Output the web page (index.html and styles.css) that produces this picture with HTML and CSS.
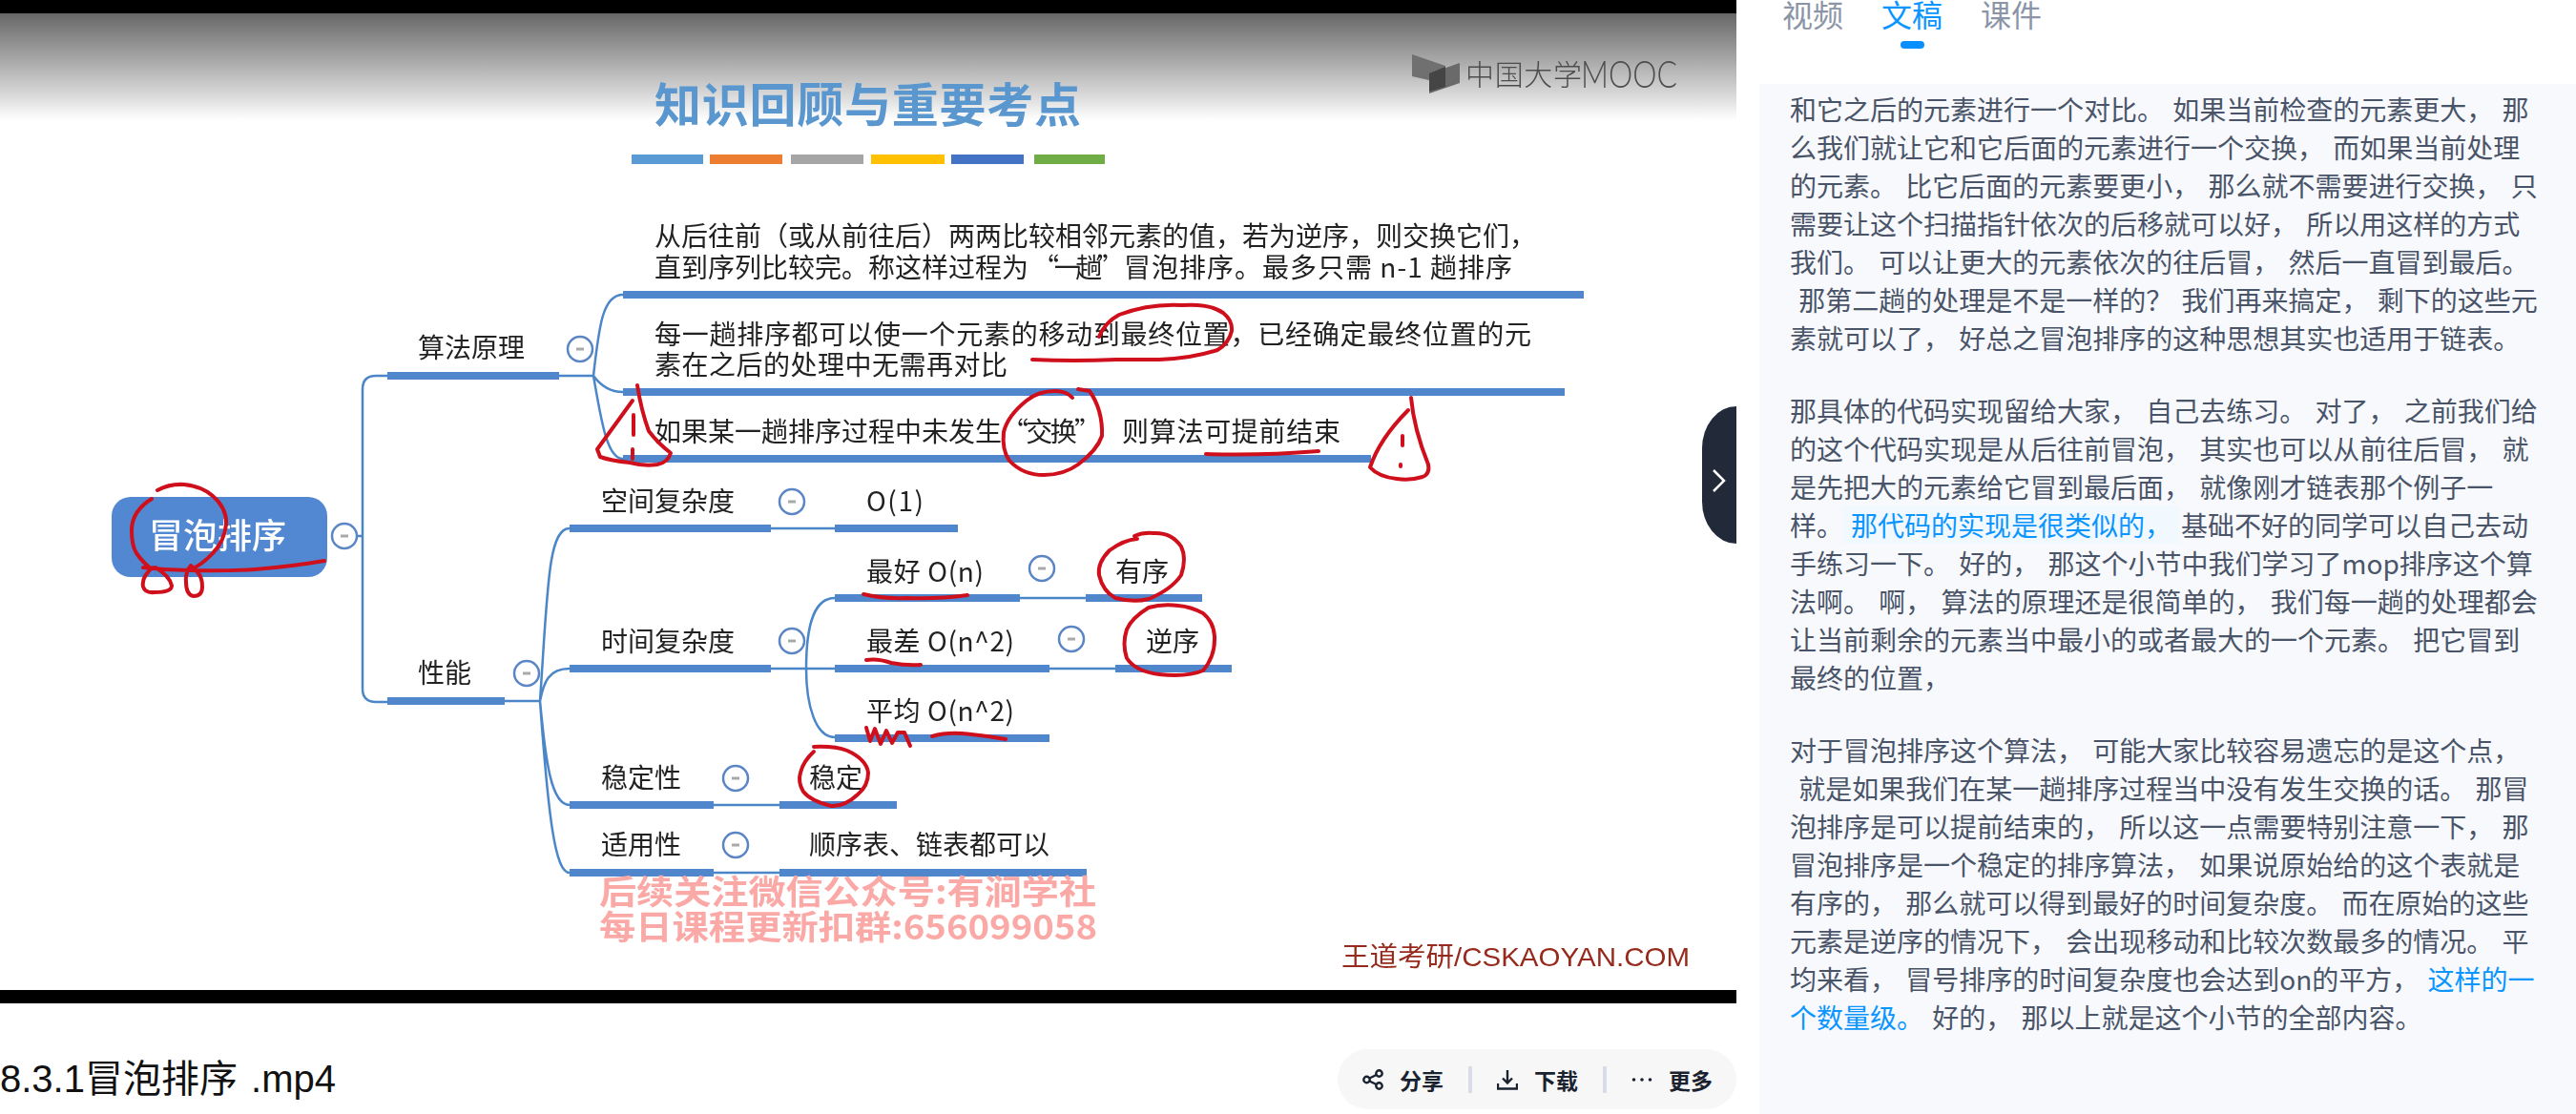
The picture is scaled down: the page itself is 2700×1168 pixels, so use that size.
FILE: index.html
```html
<!doctype html>
<html lang="zh-CN">
<head>
<meta charset="utf-8">
<title>8.3.1冒泡排序 .mp4</title>
<link rel="stylesheet" href="styles.css">
</head>
<body>
<div class="main">
	<div class="video">
		<div class="slide">
			<svg class="board" width="1820" height="1024" viewBox="0 14 1820 1024">
				<defs>
					<g id="fold">
						<circle r="13" class="fold-ring"/>
						<path d="M-4 0H4" class="fold-bar"/>
					</g>
				</defs>

				<!-- 标题 -->
				<text x="686" y="128" class="heading" textLength="447">知识回顾与重要考点</text>
				<rect x="662" y="162" width="75" height="10" class="c1"/>
				<rect x="744" y="162" width="76" height="10" class="c2"/>
				<rect x="829" y="162" width="76" height="10" class="c3"/>
				<rect x="913" y="162" width="77" height="10" class="c4"/>
				<rect x="997" y="162" width="76" height="10" class="c5"/>
				<rect x="1084" y="162" width="74" height="10" class="c6"/>

				<!-- logo -->
				<polygon points="1480,57 1515,69 1515,88 1480,80" class="logo-a"/>
				<polygon points="1498,77 1530,66 1530,87 1498,98" class="logo-b"/>
				<polygon points="1498,77 1515,70 1515,91 1498,96" class="logo-c"/>
				<text x="1536" y="89" class="logo-text" textLength="122">中国大学</text>
				<text x="1657" y="92" class="logo-latin" textLength="101" lengthAdjust="spacingAndGlyphs">MOOC</text>

				<!-- 连线 -->
				<path class="link" d="M348 562H380M406 394H394Q380 394 380 408V722Q380 736 394 736H406M586 394H622
					M622 394C628 340 632 309 653 309M622 394C630 405 640 411 653 411M622 394C630 440 636 481 653 481
					M529 735H566M566 735C574 620 574 554 597 554M566 735C570 715 575 701 597 701
					M566 735C572 800 578 844 597 844M566 735C575 860 582 915 597 915
					M808 554H875M808 701H1100M845 701C845 650 855 627 875 627M845 701C845 740 855 773 875 773
					M1069 627H1138M1100 701H1169M748 844H817M748 915H817"/>

				<!-- 节点 -->
				<rect x="117" y="521" width="226" height="84" rx="20" class="root"/>
				<text x="156" y="575" class="root-text">冒泡排序</text>

				<rect x="406" y="390" width="180" height="8" class="bar"/>
				<text x="438" y="375" class="t">算法原理</text>
				<rect x="406" y="731" width="123" height="8" class="bar"/>
				<text x="438" y="716" class="t">性能</text>

				<text x="686" y="258" class="t">从后往前（或从前往后）两两比较相邻元素的值，若为逆序，则交换它们，</text>
				<text x="686" y="291" class="t">直到序列比较完。称这样过程为</text>
				<text x="1082" y="291" class="t" textLength="96">“一趟”</text>
				<text x="1178" y="291" class="t" textLength="407">冒泡排序。最多只需 n-1 趟排序</text>
				<rect x="653" y="305" width="1007" height="8" class="bar"/>

				<text x="686" y="361" class="t" textLength="919">每一趟排序都可以使一个元素的移动到最终位置，已经确定最终位置的元</text>
				<text x="686" y="393" class="t" textLength="370">素在之后的处理中无需再对比</text>
				<rect x="653" y="407" width="987" height="8" class="bar"/>

				<text x="686" y="463" class="t">如果某一趟排序过程中未发生</text>
				<text x="1050" y="463" class="t" textLength="104">“交换”</text>
				<text x="1176" y="463" class="t" textLength="229">则算法可提前结束</text>
				<rect x="653" y="477" width="784" height="8" class="bar"/>

				<text x="630" y="536" class="t">空间复杂度</text>
				<rect x="597" y="550" width="211" height="8" class="bar"/>
				<text x="908" y="536" class="t" textLength="60">O(1)</text>
				<rect x="875" y="550" width="129" height="8" class="bar"/>

				<text x="630" y="683" class="t">时间复杂度</text>
				<rect x="597" y="697" width="211" height="8" class="bar"/>

				<text x="908" y="610" class="t" textLength="123">最好 O(n)</text>
				<rect x="875" y="623" width="194" height="8" class="bar"/>
				<text x="1169" y="610" class="t">有序</text>
				<rect x="1138" y="623" width="122" height="8" class="bar"/>

				<text x="908" y="683" class="t" textLength="155">最差 O(n^2)</text>
				<rect x="875" y="697" width="225" height="8" class="bar"/>
				<text x="1201" y="683" class="t">逆序</text>
				<rect x="1169" y="697" width="122" height="8" class="bar"/>

				<text x="908" y="756" class="t" textLength="155">平均 O(n^2)</text>
				<rect x="875" y="770" width="225" height="8" class="bar"/>

				<text x="630" y="826" class="t">稳定性</text>
				<rect x="597" y="840" width="151" height="8" class="bar"/>
				<text x="848" y="826" class="t">稳定</text>
				<rect x="817" y="840" width="123" height="8" class="bar"/>

				<text x="630" y="896" class="t">适用性</text>
				<rect x="597" y="911" width="151" height="8" class="bar"/>
				<text x="848" y="896" class="t">顺序表、链表都可以</text>
				<rect x="817" y="911" width="322" height="8" class="bar"/>

				<!-- 折叠按钮 -->
				<use href="#fold" x="361" y="562"/>
				<use href="#fold" x="608" y="366"/>
				<use href="#fold" x="552" y="706"/>
				<use href="#fold" x="830" y="526"/>
				<use href="#fold" x="830" y="672"/>
				<use href="#fold" x="1092" y="596"/>
				<use href="#fold" x="1123" y="670"/>
				<use href="#fold" x="771" y="816"/>
				<use href="#fold" x="771" y="886"/>

				<!-- 水印 -->
				<text x="628" y="948" class="mark" textLength="521" lengthAdjust="spacingAndGlyphs">后续关注微信公众号:有涧学社</text>
				<text x="628" y="985" class="mark" textLength="522" lengthAdjust="spacingAndGlyphs">每日课程更新扣群:656099058</text>
				<text x="1406" y="1013" class="site" textLength="365" lengthAdjust="spacingAndGlyphs">王道考研/CSKAOYAN.COM</text>

				<!-- 红笔 -->
				<path class="pen" d="M165 514Q178 507 193 508Q212 510 223 520Q238 533 237 550Q235 568 223 580Q212 592 200 597
					M159 523Q138 536 138 556Q138 572 143 580Q150 590 158 596
					M160 595Q148 605 150 615Q152 622 162 621Q180 621 180 614Q178 604 163 595
					M200 593Q194 600 195 610Q195 624 203 625Q212 625 212 615Q212 605 207 600L200 593
					M150 595Q175 598 200 598Q235 599 267 597Q305 594 340 588"/>
				<path class="pen" d="M668 404Q672 430 680 452Q690 465 703 475Q700 485 689 487Q675 489 660 485Q640 483 629 479L626 471Q645 445 663 420"/>
				<path class="pen" d="M664 435V456M663 471V481"/>
				<path class="pen" d="M1152 353Q1158 338 1173 330Q1205 318 1239 320Q1268 318 1282 328Q1292 336 1291 347Q1288 360 1276 367Q1248 376 1215 377L1170 377Q1125 379 1082 377"/>
				<path class="pen" d="M1124 417Q1118 410 1106 410Q1088 410 1076 420Q1056 436 1052 453Q1050 472 1058 483Q1072 498 1094 498Q1115 498 1130 487Q1150 472 1155 457Q1156 430 1142 410L1130 408"/>
				<path class="pen" d="M1264 476Q1320 478 1382 473"/>
				<path class="pen" d="M1479 417Q1482 450 1497 487Q1499 497 1491 500Q1478 504 1464 502Q1445 500 1436 490Q1446 460 1476 430"/>
				<path class="pen" d="M1470 457V467M1468 487V489"/>
				<path class="pen" d="M905 623Q925 628 951 627Q985 628 1014 624"/>
				<path class="pen" d="M1192 565Q1178 566 1163 577Q1150 590 1152 603Q1156 620 1169 627Q1188 632 1204 628Q1228 618 1238 603Q1244 585 1238 573Q1228 558 1209 559Q1198 558 1189 562"/>
				<path class="pen" d="M908 692Q920 690 934 695Q950 698 965 697"/>
				<path class="pen" d="M1235 635Q1218 633 1204 637Q1186 648 1181 660Q1176 675 1181 690Q1190 704 1215 707Q1245 710 1261 703Q1274 688 1273 667Q1272 652 1261 643Q1248 636 1235 635"/>
				<path class="pen" d="M908 763L912 777L917 764L923 780L929 766L935 779L941 768L948 768L954 782"/>
				<path class="pen" d="M977 772Q990 768 1008 769Q1030 771 1054 775"/>
				<path class="pen" d="M853 783Q875 782 888 787Q908 796 910 810Q910 824 899 833Q885 846 871 845Q850 840 842 830Q836 820 839 810Q842 798 853 788"/>
			</svg>
		</div>
		<div class="toggle">
			<svg width="16" height="24" viewBox="0 0 16 24"><path d="M2 1L13 12L2 23" class="toggle-arrow"/></svg>
		</div>
	</div>

	<div class="info">
		<div class="file-name">8.3.1冒泡排序 .mp4</div>
		<div class="actions">
			<a href="#" class="act">
				<svg width="22" height="22" viewBox="0 0 22 22" class="ico">
					<circle cx="4.5" cy="11" r="3.2"/><circle cx="17.5" cy="4.5" r="3.2"/><circle cx="17.5" cy="17.5" r="3.2"/>
					<path d="M7.4 9.5L14.6 6M7.4 12.5L14.6 16"/>
				</svg>
				<span>分享</span>
			</a>
			<i class="sep"></i>
			<a href="#" class="act">
				<svg width="22" height="22" viewBox="0 0 22 22" class="ico">
					<path d="M11 1V14M6 9.5L11 14.5L16 9.5M1 15V20.5H21V15"/>
				</svg>
				<span>下载</span>
			</a>
			<i class="sep"></i>
			<a href="#" class="act">
				<svg width="22" height="22" viewBox="0 0 22 22" class="ico-dots">
					<circle cx="2.5" cy="11" r="1.8"/><circle cx="11" cy="11" r="1.8"/><circle cx="19.5" cy="11" r="1.8"/>
				</svg>
				<span>更多</span>
			</a>
		</div>
	</div>
</div>

<div class="side">
	<div class="tabs">
		<a href="#" class="tab">视频</a>
		<a href="#" class="tab on">文稿</a>
		<a href="#" class="tab">课件</a>
	</div>
	<div class="script">
		<p>
			<span>和它之后的元素进行一个对比。 如果当前检查的元素更大， 那</span>
			<span>么我们就让它和它后面的元素进行一个交换， 而如果当前处理</span>
			<span>的元素。 比它后面的元素要更小， 那么就不需要进行交换， 只</span>
			<span>需要让这个扫描指针依次的后移就可以好， 所以用这样的方式</span>
			<span>我们。 可以让更大的元素依次的往后冒， 然后一直冒到最后。</span>
			<span> 那第二趟的处理是不是一样的？ 我们再来搞定， 剩下的这些元</span>
			<span>素就可以了， 好总之冒泡排序的这种思想其实也适用于链表。</span>
		</p>
		<p>
			<span>那具体的代码实现留给大家， 自己去练习。 对了， 之前我们给</span>
			<span>的这个代码实现是从后往前冒泡， 其实也可以从前往后冒， 就</span>
			<span>是先把大的元素给它冒到最后面， 就像刚才链表那个例子一</span>
			<span>样。<b class="now">那代码的实现是很类似的，</b>基础不好的同学可以自己去动</span>
			<span>手练习一下。 好的， 那这个小节中我们学习了mop排序这个算</span>
			<span>法啊。 啊， 算法的原理还是很简单的， 我们每一趟的处理都会</span>
			<span>让当前剩余的元素当中最小的或者最大的一个元素。 把它冒到</span>
			<span>最终的位置，</span>
		</p>
		<p>
			<span>对于冒泡排序这个算法， 可能大家比较容易遗忘的是这个点，</span>
			<span> 就是如果我们在某一趟排序过程当中没有发生交换的话。 那冒</span>
			<span>泡排序是可以提前结束的， 所以这一点需要特别注意一下， 那</span>
			<span>冒泡排序是一个稳定的排序算法， 如果说原始给的这个表就是</span>
			<span>有序的， 那么就可以得到最好的时间复杂度。 而在原始的这些</span>
			<span>元素是逆序的情况下， 会出现移动和比较次数最多的情况。 平</span>
			<span>均来看， 冒号排序的时间复杂度也会达到on的平方， <b class="hit">这样的一</b></span>
			<span><b class="hit">个数量级。</b> 好的， 那以上就是这个小节的全部内容。</span>
		</p>
	</div>
</div>
</body>
</html>
```

FILE: styles.css
```css
* {padding:0;margin:0;box-sizing:border-box;}
html,body {height:100%;overflow:hidden;}
body {display:flex;
	background:#fff;
	font-family:"Liberation Sans","Noto Sans CJK SC",sans-serif;
}
a {text-decoration:none;color:inherit;}

.main {width:1820px;flex:none;}
.video {position:relative;
	height:1052px;
	padding:14px 0;
	background:#000;
}
.slide {height:1024px;
	background:linear-gradient(#676767,#d8d8d8 85px,#fff 112px);
}
.board {display:block;filter:blur(.6px);}
.board text {font-family:"Noto Sans CJK SC","Liberation Sans",sans-serif;}
.heading {font-size:49px;font-weight:700;fill:#5b97cf;}
.c1 {fill:#5b9bd5;}
.c2 {fill:#ed7d31;}
.c3 {fill:#a5a5a5;}
.c4 {fill:#ffc000;}
.c5 {fill:#4472c4;}
.c6 {fill:#70ad47;}
.logo-a {fill:#707070;}
.logo-b {fill:#6a6a6a;}
.logo-c {fill:#454545;}
.logo-text {font-size:30px;font-weight:300;fill:#4d4d4d;}
.board .logo-latin {font-family:"Lato","Liberation Sans",sans-serif;font-size:40px;font-weight:300;fill:#4d4d4d;}
.t {font-size:28px;fill:#222;}
.root {fill:#5288d2;}
.root-text {font-size:36px;font-weight:500;fill:#fff;}
.bar {fill:#4f86cc;}
.link {fill:none;stroke:#4a86c8;stroke-width:2.5;}
.fold-ring {fill:#fff;stroke:#5b85c5;stroke-width:2.5;}
.fold-bar {stroke:#a9a9a9;stroke-width:3;}
.mark {font-size:35px;font-weight:700;fill:#fba9a6;}
.board .site {font-family:"Liberation Sans","Noto Sans CJK SC",sans-serif;font-size:28px;fill:#962a1c;}
.pen {fill:none;stroke:#cf0f1c;stroke-width:4;stroke-linecap:round;stroke-linejoin:round;}

.toggle {position:absolute;
	top:426px;
	right:0;
	width:36px;
	height:144px;
	display:flex;
	align-items:center;
	justify-content:center;
	padding-top:12px;
	background:#222a3a;
	border-radius:36px 0 0 36px / 44px 0 0 44px;
}
.toggle-arrow {fill:none;stroke:#fff;stroke-width:2.5;}

.info {display:flex;
	justify-content:space-between;
	align-items:flex-start;
	padding-top:48px;
}
.file-name {font-size:40px;line-height:63px;word-spacing:3px;color:#111;}
.actions {display:flex;
	align-items:center;
	width:418px;
	height:63px;
	padding:0 25px 0 26px;
	justify-content:space-between;
	background:#f7f7f8;
	border-radius:32px;
}
.act {display:flex;
	align-items:center;
	gap:17px;
	font-size:23px;
	font-weight:700;
	color:#1a2230;
}
.ico {fill:none;stroke:#1a2230;stroke-width:2.4;}
.ico-dots {fill:#1a2230;}
.sep {width:4px;height:28px;background:#d9dce6;}

.side {margin-left:24px;flex:1;display:flex;flex-direction:column;}
.tabs {display:flex;gap:40px;height:88px;padding:1px 0 0 24px;flex:none;}
.tab {display:flex;
	flex-direction:column;
	align-items:center;
	height:51px;
	font-size:32px;
	line-height:32px;
	color:#8b95a7;
}
.tab.on {color:#0a95ff;}
.tab.on:after {content:"";
	width:25px;
	height:8px;
	margin-top:10px;
	border-radius:4px;
	background:#0a8fff;
}
.script {flex:1;
	padding:6px 0 0 32px;
	background:#f7f9fd;
	font-family:"Noto Sans CJK SC","Liberation Sans",sans-serif;
	font-size:28px;
	line-height:40px;
	word-spacing:3px;
	color:#4a5468;
}
.script p {margin-bottom:36px;}
.script span {display:block;white-space:pre;}
.script b {font-weight:400;}
.hit {color:#0a95ff;}
.now {display:inline-block;margin-right:2px;padding:0 8px;color:#0a95ff;background:#f1f9fe;}
```
